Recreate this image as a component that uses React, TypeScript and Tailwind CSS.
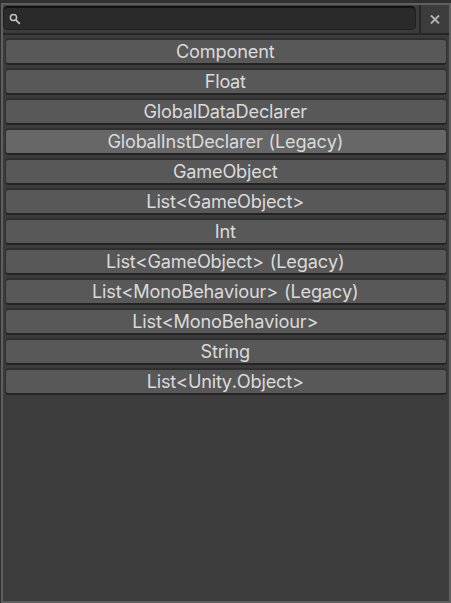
const items = [
  'Component',
  'Float',
  'GlobalDataDeclarer',
  'GlobalInstDeclarer (Legacy)',
  'GameObject',
  'List<GameObject>',
  'Int',
  'List<GameObject> (Legacy)',
  'List<MonoBehaviour> (Legacy)',
  'List<MonoBehaviour>',
  'String',
  'List<Unity.Object>',
];

function Toolbar() {
  return (
    <div className="flex h-[30px] shrink-0 border-b-2 border-[#272727] bg-[#3c3c3c]">
      <div className="mt-px flex h-6 w-[413px] items-center rounded-[5px] border border-t-2 border-[#202020] border-t-[#121212] bg-[#2a2a2a] pl-[5px]">
        <svg width="12" height="12" viewBox="0 0 12 12" fill="none" stroke="#c4c4c4">
          <circle cx="4.5" cy="4.5" r="3.1" strokeWidth="1.5" />
          <path d="M6.7 6.9 L10.8 10.8" strokeWidth="1.8" />
        </svg>
      </div>
      <button className="ml-[3px] flex flex-1 items-center justify-center border-l-2 border-[#272727]">
        <svg width="10" height="10" viewBox="0 0 10 10" fill="none" stroke="#b4b4b4" strokeWidth="1.8">
          <path d="M1 1.5 L9 9.5 M9 1.5 L1 9.5" />
        </svg>
      </button>
    </div>
  );
}

export default function App() {
  return (
    <div className="h-[603px] w-[451px] bg-[#303030] pt-[3px] pl-px font-['Inter',sans-serif]">
      <div className="flex h-[600px] w-[450px] flex-col border-2 border-[#5f5f5f] bg-[#3c3c3c]">
        <Toolbar />
        <div className="flex flex-col gap-[3px] px-[2px] pt-[3px]">
          {items.map((name, i) => (
            <button
              key={name}
              className={`flex h-[27px] items-center justify-center rounded-[4px] border-x border-y-2 border-[#303030] border-b-[#242424] pr-[1.5px] text-[18.2px] leading-[23px] tracking-[-0.2px] text-[#dadada] [font-feature-settings:'calt'_0] [font-kerning:none] [word-spacing:1px] ${
                i === 3 ? 'bg-[#676767]' : 'bg-[#585858]'
              }`}
            >
              {name}
            </button>
          ))}
        </div>
      </div>
    </div>
  );
}
